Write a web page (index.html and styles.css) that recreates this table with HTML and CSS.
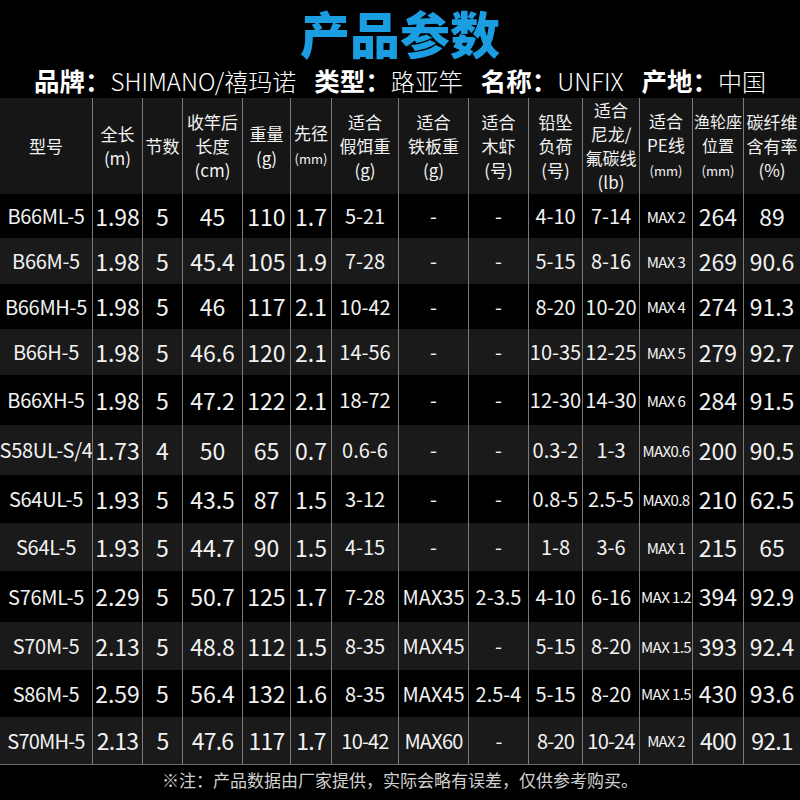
FILE: index.html
```html
<!DOCTYPE html>
<html lang="zh">
<head>
<meta charset="utf-8">
<title>产品参数</title>
<link rel="stylesheet" href="styles.css">
</head>
<body>
<div class="page">
  <h1 class="title">产品参数</h1>
  <div class="info">
    <span class="lab">品牌：</span><span class="val">SHIMANO/禧玛诺</span><span class="lab gap">类型：</span><span class="val">路亚竿</span><span class="lab gap">名称：</span><span class="val">UNFIX</span><span class="lab gap">产地：</span><span class="val">中国</span>
  </div>
  <div class="table">
    <div class="row head">
      <div class="c">型号</div>
      <div class="c"><span>全长<br>(m)</span></div>
      <div class="c">节数</div>
      <div class="c"><span>收竿后<br>长度<br>(cm)</span></div>
      <div class="c"><span>重量<br>(g)</span></div>
      <div class="c"><span>先径<br><small>(mm)</small></span></div>
      <div class="c"><span>适合<br>假饵重<br>(g)</span></div>
      <div class="c"><span>适合<br>铁板重<br>(g)</span></div>
      <div class="c"><span>适合<br>木虾<br>(号)</span></div>
      <div class="c"><span>铅坠<br>负荷<br>(号)</span></div>
      <div class="c"><span>适合<br>尼龙/<br>氟碳线<br>(lb)</span></div>
      <div class="c"><span>适合<br>PE线<br><small>(mm)</small></span></div>
      <div class="c narrow"><span>渔轮座<br>位置<br><small>(mm)</small></span></div>
      <div class="c"><span>碳纤维<br>含有率<br>(%)</span></div>
    </div>
    <div class="row"><div class="c">B66ML-5</div><div class="c">1.98</div><div class="c">5</div><div class="c">45</div><div class="c">110</div><div class="c">1.7</div><div class="c">5-21</div><div class="c">-</div><div class="c">-</div><div class="c">4-10</div><div class="c">7-14</div><div class="c">MAX 2</div><div class="c">264</div><div class="c">89</div></div>
    <div class="row"><div class="c">B66M-5</div><div class="c">1.98</div><div class="c">5</div><div class="c">45.4</div><div class="c">105</div><div class="c">1.9</div><div class="c">7-28</div><div class="c">-</div><div class="c">-</div><div class="c">5-15</div><div class="c">8-16</div><div class="c">MAX 3</div><div class="c">269</div><div class="c">90.6</div></div>
    <div class="row"><div class="c">B66MH-5</div><div class="c">1.98</div><div class="c">5</div><div class="c">46</div><div class="c">117</div><div class="c">2.1</div><div class="c">10-42</div><div class="c">-</div><div class="c">-</div><div class="c">8-20</div><div class="c">10-20</div><div class="c">MAX 4</div><div class="c">274</div><div class="c">91.3</div></div>
    <div class="row"><div class="c">B66H-5</div><div class="c">1.98</div><div class="c">5</div><div class="c">46.6</div><div class="c">120</div><div class="c">2.1</div><div class="c">14-56</div><div class="c">-</div><div class="c">-</div><div class="c">10-35</div><div class="c">12-25</div><div class="c">MAX 5</div><div class="c">279</div><div class="c">92.7</div></div>
    <div class="row"><div class="c">B66XH-5</div><div class="c">1.98</div><div class="c">5</div><div class="c">47.2</div><div class="c">122</div><div class="c">2.1</div><div class="c">18-72</div><div class="c">-</div><div class="c">-</div><div class="c">12-30</div><div class="c">14-30</div><div class="c">MAX 6</div><div class="c">284</div><div class="c">91.5</div></div>
    <div class="row"><div class="c">S58UL-S/4</div><div class="c">1.73</div><div class="c">4</div><div class="c">50</div><div class="c">65</div><div class="c">0.7</div><div class="c">0.6-6</div><div class="c">-</div><div class="c">-</div><div class="c">0.3-2</div><div class="c">1-3</div><div class="c">MAX0.6</div><div class="c">200</div><div class="c">90.5</div></div>
    <div class="row"><div class="c">S64UL-5</div><div class="c">1.93</div><div class="c">5</div><div class="c">43.5</div><div class="c">87</div><div class="c">1.5</div><div class="c">3-12</div><div class="c">-</div><div class="c">-</div><div class="c">0.8-5</div><div class="c">2.5-5</div><div class="c">MAX0.8</div><div class="c">210</div><div class="c">62.5</div></div>
    <div class="row"><div class="c">S64L-5</div><div class="c">1.93</div><div class="c">5</div><div class="c">44.7</div><div class="c">90</div><div class="c">1.5</div><div class="c">4-15</div><div class="c">-</div><div class="c">-</div><div class="c">1-8</div><div class="c">3-6</div><div class="c">MAX 1</div><div class="c">215</div><div class="c">65</div></div>
    <div class="row"><div class="c">S76ML-5</div><div class="c">2.29</div><div class="c">5</div><div class="c">50.7</div><div class="c">125</div><div class="c">1.7</div><div class="c">7-28</div><div class="c">MAX35</div><div class="c">2-3.5</div><div class="c">4-10</div><div class="c">6-16</div><div class="c">MAX 1.2</div><div class="c">394</div><div class="c">92.9</div></div>
    <div class="row"><div class="c">S70M-5</div><div class="c">2.13</div><div class="c">5</div><div class="c">48.8</div><div class="c">112</div><div class="c">1.5</div><div class="c">8-35</div><div class="c">MAX45</div><div class="c">-</div><div class="c">5-15</div><div class="c">8-20</div><div class="c">MAX 1.5</div><div class="c">393</div><div class="c">92.4</div></div>
    <div class="row"><div class="c">S86M-5</div><div class="c">2.59</div><div class="c">5</div><div class="c">56.4</div><div class="c">132</div><div class="c">1.6</div><div class="c">8-35</div><div class="c">MAX45</div><div class="c">2.5-4</div><div class="c">5-15</div><div class="c">8-20</div><div class="c">MAX 1.5</div><div class="c">430</div><div class="c">93.6</div></div>
    <div class="row last"><div class="c">S70MH-5</div><div class="c">2.13</div><div class="c">5</div><div class="c">47.6</div><div class="c">117</div><div class="c">1.7</div><div class="c">10-42</div><div class="c">MAX60</div><div class="c">-</div><div class="c">8-20</div><div class="c">10-24</div><div class="c">MAX 2</div><div class="c">400</div><div class="c">92.1</div></div>
  </div>
  <div class="note">※注：产品数据由厂家提供，实际会略有误差，仅供参考购买。</div>
</div>
</body>
</html>
```
FILE: styles.css
```css
html, body {
  margin: 0;
  padding: 0;
  background: #000;
}
body {
  font-family: "Noto Sans CJK SC", "Noto Sans", sans-serif;
  color: #f2f2f2;
}
.page {
  width: 800px;
  height: 800px;
  overflow: hidden;
  background: #000;
}
.title {
  margin: 0;
  padding-top: 3px;
  height: 59px;
  line-height: 59px;
  font-size: 50px;
  font-weight: 900;
  color: #1a9de1;
  text-align: center;
  letter-spacing: 0;
}
.info {
  height: 36px;
  line-height: 36px;
  text-align: center;
  white-space: nowrap;
  color: #fff;
}
.info .lab {
  font-size: 25.5px;
  font-weight: 700;
}
.info .val {
  font-size: 24px;
  font-weight: 300;
}
.info .gap {
  margin-left: 18px;
}
.row {
  display: grid;
  grid-template-columns: 92px 50px 40px 60px 48px 41px 67px 70px 60px 54px 57px 53px 51px 57px;
  height: 47.5px;
}
.row:nth-child(odd) {
  background: #1a1a1a;
}
.row:nth-child(even) {
  background: #000;
}
.row:nth-child(2) { height: 44px; }
.row:nth-child(3) { height: 46px; }
.row:nth-child(4) { height: 45px; }
.row:nth-child(5) { height: 46px; }
.row:nth-child(6) { height: 50px; }
.row:nth-child(7) { height: 50px; }
.row:nth-child(8) { height: 48px; }
.row:nth-child(9) { height: 48px; }
.row:nth-child(10) { height: 51px; }
.row:nth-child(11) { height: 48px; }
.row:nth-child(12) { height: 47px; }
.row:nth-child(13) { height: 47px; }
.row.head {
  height: 96px;
  background: #161616;
}
.c {
  display: flex;
  align-items: center;
  justify-content: center;
  text-align: center;
  white-space: nowrap;
  border-left: 1px solid #7a7a7a;
  font-size: 23px;
  line-height: 1;
}
.c:first-child {
  border-left: none;
  font-size: 20px;
  letter-spacing: -0.3px;
}
.row .c:nth-child(7),
.row .c:nth-child(8),
.row .c:nth-child(9),
.row .c:nth-child(10),
.row .c:nth-child(11) {
  font-size: 20px;
}
.row .c:nth-child(12) {
  font-size: 15px;
  letter-spacing: -0.6px;
}
.row.last .c {
  letter-spacing: -0.8px;
}
.row.last .c:nth-child(12) {
  letter-spacing: -0.8px;
}
.head .c,
.head .c:first-child,
.head .c:nth-child(n) {
  font-size: 17px;
  line-height: 24px;
  letter-spacing: 0;
}
.head .c.narrow {
  font-size: 16px;
}
.head small {
  font-size: 13px;
}
.table {
  border-bottom: 1px solid #6a6a6a;
}
.note {
  height: 35px;
  line-height: 30px;
  font-size: 17px;
  text-align: center;
  color: #d0d0d0;
  white-space: nowrap;
}
```
